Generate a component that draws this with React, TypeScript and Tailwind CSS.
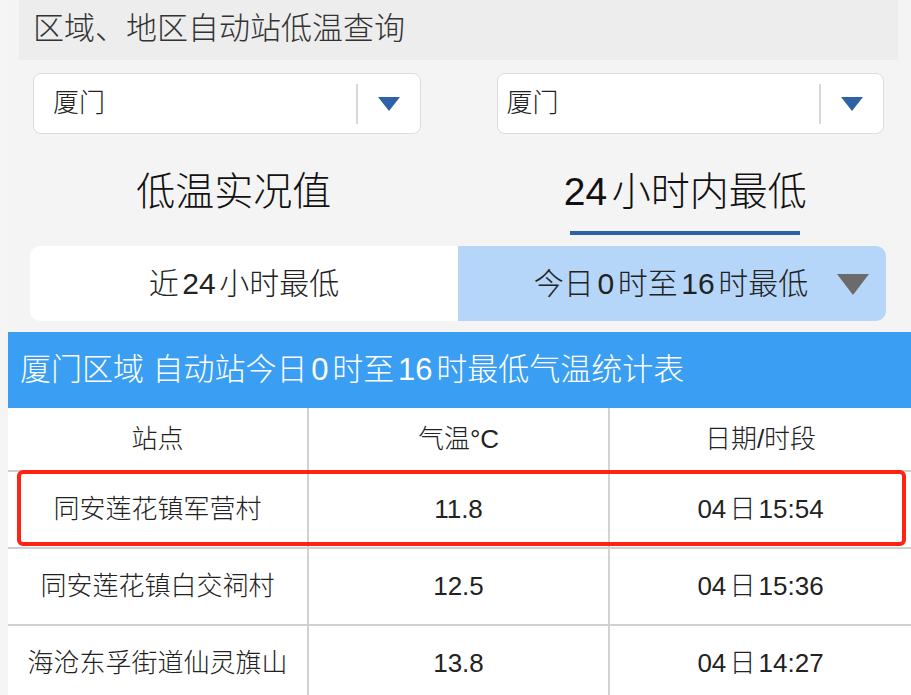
import React from 'react';

const rows = [
  { name: '同安莲花镇军营村', temp: '11.8', time: '04日15:54', marked: true },
  { name: '同安莲花镇白交祠村', temp: '12.5', time: '04日15:36' },
  { name: '海沧东孚街道仙灵旗山', temp: '13.8', time: '04日14:27' },
];

// adds the small gap that iOS puts between CJK and latin runs
const T = ({ s }: { s: string }) => {
  const parts = s.split(/([0-9A-Za-z.:]+)/).filter(Boolean);
  return (
    <>
      {parts.map((p, i) =>
        /^[0-9A-Za-z.:]+$/.test(p) ? (
          <span key={i} className={`${i > 0 ? 'ml-[0.12em]' : ''} ${i < parts.length - 1 ? 'mr-[0.12em]' : ''}`}>{p}</span>
        ) : (
          <span key={i}>{p}</span>
        ),
      )}
    </>
  );
};

const Caret = ({ color }: { color: string }) => (
  <svg width="22" height="14" viewBox="0 0 22 14">
    <path d="M0 0 L22 0 L11 14 Z" fill={color} />
  </svg>
);

const CitySelect = ({ textPad }: { textPad: string }) => (
  <div className="flex-1 h-[61px] bg-white border border-[#dcdcdc] rounded-[8px] flex items-center">
    <span className={`flex-1 text-[26px] text-[#222] ${textPad}`}>厦门</span>
    <div className="w-[2px] h-[40px] bg-[#d8d8d8]" />
    <div className="w-[62px] flex justify-center">
      <Caret color="#2d62a6" />
    </div>
  </div>
);

const cell = 'flex items-center justify-center text-[26px] text-[#222]';

export default function App() {
  return (
    <div
      className="min-h-screen bg-[#f5f5f5] overflow-hidden font-light"
      style={{ fontFamily: '"Liberation Sans", "Noto Sans CJK SC", sans-serif' }}
    >
      <div className="ml-[8px] w-[903px] bg-[#f4f4f4]">
        {/* title */}
        <div className="ml-[11px] w-[879px] h-[60px] bg-[#ededed] flex items-center pl-[14px]">
          <span className="text-[31px] text-[#333] leading-none -mt-[4px]">区域、地区自动站低温查询</span>
        </div>

        {/* selects */}
        <div className="flex gap-[76px] pl-[25px] pr-[27px] mt-[13px]">
          <CitySelect textPad="pl-[19px]" />
          <CitySelect textPad="pl-[9px]" />
        </div>

        {/* main tabs */}
        <div className="flex h-[106px]">
          <div className="flex-1 flex flex-col items-center justify-end">
            <span className="text-[39px] text-[#111] leading-none mb-[20px]">低温实况值</span>
            <div className="w-[230px] h-[4px] mb-[5px]" />
          </div>
          <div className="flex-1 flex flex-col items-center justify-end">
            <span className="text-[39px] text-[#111] leading-none mb-[20px]"><T s="24小时内最低" /></span>
            <div className="w-[230px] h-[4px] bg-[#2c62a8] mb-[5px]" />
          </div>
        </div>

        {/* sub tabs */}
        <div className="flex mt-[6px] ml-[22px] mr-[25px] h-[75px]">
          <div className="flex-1 bg-white rounded-l-[10px] flex items-center justify-center">
            <span className="text-[30px] text-[#222]"><T s="近24小时最低" /></span>
          </div>
          <div className="flex-1 bg-[#b5d5f9] rounded-r-[10px] flex items-center justify-center relative">
            <span className="text-[30px] text-[#222] -ml-[2px]"><T s="今日0时至16时最低" /></span>
            <svg className="absolute right-[17px] top-[28px]" width="32" height="21" viewBox="0 0 32 21">
              <path d="M0 0 L32 0 L16 21 Z" fill="#6b6b6b" />
            </svg>
          </div>
        </div>

        {/* band */}
        <div className="mt-[11px] h-[76px] bg-[#3a9ef2] flex items-center pl-[12px]">
          <span className="text-[31px] text-white"><T s="厦门区域 自动站今日0时至16时最低气温统计表" /></span>
        </div>

        {/* table */}
        <div className="bg-white">
          <div className="grid grid-cols-3 h-[64px] border-b-2 border-[#cfcfcf]">
            <div className={`${cell} border-r-2 border-[#d2d2d2]`}>站点</div>
            <div className={`${cell} border-r-2 border-[#d2d2d2]`}>气温°C</div>
            <div className={cell}>日期/时段</div>
          </div>
          {rows.map((r) => (
            <div key={r.name} className="relative grid grid-cols-3 h-[77px] border-b-2 border-[#d0d0d0]">
              <div className={`${cell} border-r-2 border-[#d2d2d2]`}>{r.name}</div>
              <div className={`${cell} border-r-2 border-[#d2d2d2]`}>{r.temp}</div>
              <div className={cell}><T s={r.time} /></div>
              {r.marked && (
                <div className="absolute left-[9px] right-[5px] -top-[2px] bottom-[1px] border-[4px] border-[#ff2314] rounded-[6px] pointer-events-none" />
              )}
            </div>
          ))}
        </div>
      </div>
    </div>
  );
}
